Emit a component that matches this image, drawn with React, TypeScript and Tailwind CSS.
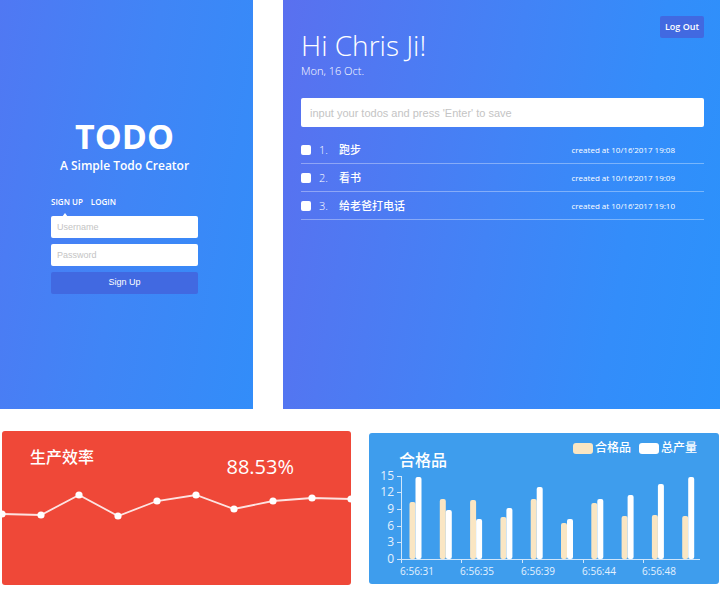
const todos = [
  { id: 1, text: "跑步", created: "created at 10/16'2017 19:08" },
  { id: 2, text: "看书", created: "created at 10/16'2017 19:09" },
  { id: 3, text: "给老爸打电话", created: "created at 10/16'2017 19:10" },
];

const efficiency = [
  [0, 83], [39, 84], [77, 64], [116, 85], [155, 70],
  [194, 64], [232, 78], [271, 70], [310, 67], [349, 68],
];

const yTicks = [
  { label: "15", y: 6 }, { label: "12", y: 22 }, { label: "9", y: 39 },
  { label: "6", y: 56 }, { label: "3", y: 72 }, { label: "0", y: 89 },
];

const xTicks = [
  { label: "6:56:31", x: 32 }, { label: "6:56:35", x: 92 }, { label: "6:56:39", x: 153 },
  { label: "6:56:44", x: 214 }, { label: "6:56:48", x: 274 },
];

// Bar heights above the x axis: [qualified, total]
const bars = [
  [57, 82], [60, 49], [59, 40], [42, 51], [60, 72],
  [36, 40], [56, 60], [43, 64], [44, 75], [43, 82],
];

function AuthPanel() {
  return (
    <section className="flex min-h-[409px] flex-col items-center justify-center bg-[linear-gradient(100deg,#5078f3_0%,#4085f6_50%,#328df9_100%)] pr-1 text-white">
      <h1 className="text-[34px] leading-10 font-bold">TODO</h1>
      <p className="text-[12px] leading-5 font-semibold">A Simple Todo Creator</p>
      <div className="mt-[18px] w-[147px]">
        <nav className="flex gap-2 text-[8px] leading-4 font-semibold">
          <button type="button" className="relative">
            SIGN UP
            <span className="absolute top-[19px] left-[11px] border-x-[3px] border-b-[4px] border-x-transparent border-b-white" />
          </button>
          <button type="button">LOGIN</button>
        </nav>
        <form className="mt-[6px] flex flex-col gap-[6px] font-['Liberation_Sans',Arial,sans-serif] text-[9px]">
          <input
            aria-label="Username"
            placeholder="Username"
            className="h-[22px] w-full rounded-xs bg-white px-[6px] text-gray-700 placeholder:text-[#c4c4c4]"
          />
          <input
            aria-label="Password"
            type="password"
            placeholder="Password"
            className="h-[22px] w-full rounded-xs bg-white px-[6px] text-gray-700 placeholder:text-[#c4c4c4]"
          />
          <button type="button" className="h-[22px] w-full rounded-xs bg-[#4169e1]">
            Sign Up
          </button>
        </form>
      </div>
    </section>
  );
}

function TodoPanel() {
  return (
    <section className="bg-[linear-gradient(100deg,#5a70ef_0%,#4283f6_48%,#338dfa_76%,#2b92fb_100%)] pt-4 pr-4 pl-[18px] text-white">
      <header className="flex items-start justify-between">
        <div className="pt-3">
          <h2 className="text-[28px] leading-[34px] font-light">Hi Chris Ji!</h2>
          <p className="text-[11px] leading-[18px] font-light">Mon, 16 Oct.</p>
        </div>
        <button type="button" className="h-[22px] rounded-xs bg-[#4169e1] px-[5px] text-[9px] font-semibold">
          Log Out
        </button>
      </header>
      <input
        aria-label="New todo"
        placeholder="input your todos and press 'Enter' to save"
        className="mt-[18px] h-[29px] w-full rounded-xs bg-white px-[9px] font-['Liberation_Sans',Arial,sans-serif] text-[11px] text-gray-700 placeholder:text-[#c4c4c4]"
      />
      <ul className="mt-[9px]">
        {todos.map((todo) => (
          <li key={todo.id} className="flex h-7 items-center border-b border-white/35 pr-[29px]">
            <input
              id={`todo-${todo.id}`}
              type="checkbox"
              className="size-[10px] appearance-none rounded-xs bg-white"
            />
            <label htmlFor={`todo-${todo.id}`} className="flex flex-1 items-center pl-2 text-[11px] leading-4">
              <span className="w-5 font-light">{todo.id}.</span>
              <span className="font-medium">{todo.text}</span>
            </label>
            <time className="text-[8px] leading-4">{todo.created}</time>
          </li>
        ))}
      </ul>
    </section>
  );
}

function EfficiencyCard() {
  return (
    <section className="relative overflow-hidden rounded-[3px] bg-[#ef4838] text-white">
      <svg viewBox="0 0 349 154" className="block w-full" role="img" aria-label="生产效率">
        <polyline
          points={efficiency.map((p) => p.join(",")).join(" ")}
          fill="none"
          stroke="#fff"
          strokeOpacity="0.85"
          strokeWidth="1.8"
        />
        {efficiency.map(([x, y]) => (
          <circle key={x} cx={x} cy={y} r="3.6" fill="#fff" />
        ))}
      </svg>
      <header className="absolute inset-x-0 top-4 flex justify-between pr-[57px] pl-7">
        <h3 className="text-[16px] leading-5 font-medium">生产效率</h3>
        <p className="pt-2 text-[20px] leading-6">88.53%</p>
      </header>
    </section>
  );
}

function QualifiedCard() {
  return (
    <section className="rounded-[3px] bg-[#3e9ded] text-white">
      <ul className="flex justify-end gap-2 pt-[7px] pr-[22px] text-[12px] leading-4 font-medium">
        <li className="flex items-center gap-[2px]">
          <span className="h-[11px] w-5 rounded-[3px] bg-[#fae6c3]" />
          合格品
        </li>
        <li className="flex items-center gap-[2px]">
          <span className="h-[11px] w-5 rounded-[3px] bg-white" />
          总产量
        </li>
      </ul>
      <h3 className="-mt-1 pl-[30px] text-[16px] leading-4 font-medium">合格品</h3>
      <svg viewBox="0 0 350 116" className="block w-full" role="img" aria-label="合格品 总产量">
        <g transform="translate(0 2)">
          <g stroke="#cfe6fb" strokeWidth="1">
            <path d="M32.5 6V89M32 89.5H331" fill="none" />
            {yTicks.map((t) => (
              <path key={t.label} d={`M28 ${t.y + 0.5}H32`} />
            ))}
            {xTicks.map((t) => (
              <path key={t.label} d={`M${t.x + 0.5} 89V93`} />
            ))}
          </g>
          {bars.map(([qualified, total], i) => (
            <g key={i}>
              <rect x={40.5 + i * 30.3} y={89 - qualified} width="6" height={qualified} rx="2" fill="#fae6c3" />
              <rect x={46.5 + i * 30.3} y={89 - total} width="6" height={total} rx="2" fill="#fff" />
            </g>
          ))}
          <g fill="#e4f1fd" fontSize="12" textAnchor="end">
            {yTicks.map((t) => (
              <text key={t.label} x="25" y={t.y + 4}>{t.label}</text>
            ))}
          </g>
          <g fill="#e4f1fd" fontSize="10" textAnchor="middle">
            {xTicks.map((t) => (
              <text key={t.label} x={t.x + 16} y="105">{t.label}</text>
            ))}
          </g>
        </g>
      </svg>
    </section>
  );
}

export default function App() {
  return (
    <main className="bg-white font-['Open_Sans','Noto_Sans_CJK_SC',sans-serif]">
      <div className="grid grid-cols-[253fr_437fr] gap-[30px]">
        <AuthPanel />
        <TodoPanel />
      </div>
      <div className="grid grid-cols-[349fr_350fr] items-start gap-[18px] pt-[22px] pr-px pb-1 pl-[2px]">
        <EfficiencyCard />
        <div className="pt-[2px]">
          <QualifiedCard />
        </div>
      </div>
    </main>
  );
}
